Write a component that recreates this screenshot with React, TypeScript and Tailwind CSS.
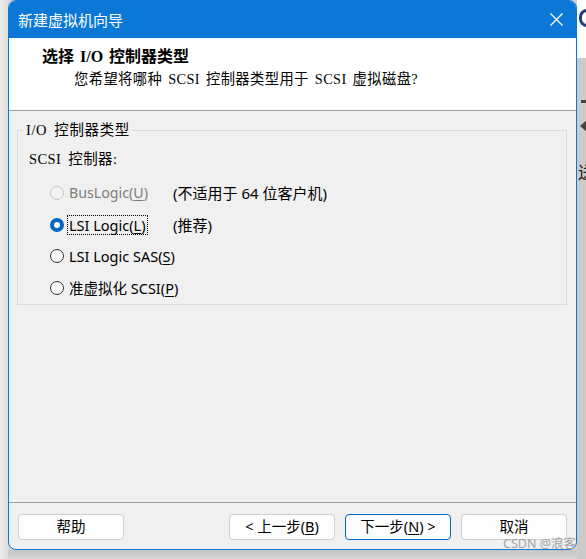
import React from "react";

const ui = "font-['Segoe_UI','Noto_Sans','Noto_Sans_CJK_SC',sans-serif]";
const song = "font-['Liberation_Serif','Noto_Sans_CJK_SC',serif]";

function Radio({ state }: { state: "checked" | "off" | "disabled" }) {
  if (state === "checked") {
    return (
      <span className="w-[14px] h-[14px] rounded-full bg-[#0067c0] flex items-center justify-center shrink-0">
        <span className="w-[6px] h-[6px] rounded-full bg-white" />
      </span>
    );
  }
  return (
    <span
      className={
        "w-[14px] h-[14px] rounded-full border shrink-0 " +
        (state === "disabled" ? "border-[#c6c6c6] bg-[#f3f3f3]" : "border-[#333333] bg-[#f7f7f7]")
      }
    />
  );
}

function Btn({ children, primary }: { children: React.ReactNode; primary?: boolean }) {
  return (
    <div
      className={
        "w-[106px] h-[26px] rounded-[4px] bg-[#fdfdfd] flex items-center justify-center text-[14.5px] text-black border " +
        (primary ? "border-[#0067c0]" : "border-[#d0d0d0]")
      }
    >
      {children}
    </div>
  );
}

export default function App() {
  return (
    <div className={"relative w-[586px] h-[559px] flex overflow-hidden bg-[#d4d4d4] " + ui}>
      {/* left backdrop */}
      <div className="w-[8px] h-full bg-gradient-to-r from-[#ebebeb] to-[#dedede]" />
      {/* window column */}
      <div className="w-[569px] h-full flex flex-col">
        <div className="w-[569px] h-[550px] flex flex-col rounded-[8px] border border-[#0a78d4] overflow-hidden bg-[#f0f0f0]">
          {/* title bar */}
          <div className="h-[37px] bg-[#0a78d4] flex items-center justify-between pl-[9px] pr-[13px] shrink-0">
            <span className="text-white text-[15px] leading-[20px] font-['Noto_Sans_CJK_SC',sans-serif]">
              新建虚拟机向导
            </span>
            <svg width="13" height="13" viewBox="0 0 13 13" className="mb-[1px]">
              <path d="M0.5 0.5 L12.5 12.5 M12.5 0.5 L0.5 12.5" stroke="white" strokeWidth="1.3" fill="none" />
            </svg>
          </div>
          {/* header */}
          <div className="h-[73px] bg-white border-b border-[#a0a0a0] shrink-0 flex flex-col pt-[9px]">
            <div className={"pl-[33px] text-[16px] leading-[20px] font-bold text-black [word-spacing:2px] " + song}>
              选择 I/O 控制器类型
            </div>
            <div
              className={
                "pl-[65px] mt-[2px] text-[14.3px] leading-[20px] text-black tracking-[0.4px] [word-spacing:2px] " + song
              }
            >
              您希望将哪种 SCSI 控制器类型用于 SCSI 虚拟磁盘?
            </div>
          </div>
          {/* main */}
          <div className="h-[392px] border-b border-[#a0a0a0] shrink-0 pt-[10px] pl-[8px] pr-[9px]">
            <fieldset className="border border-[#dcdcdc] pb-[0px]">
              <legend
                className={
                  "ml-[6px] px-[2px] text-[14.5px] leading-[18px] text-black tracking-[0.6px] [word-spacing:3px] " + song
                }
              >
                I/O 控制器类型
              </legend>
              <div
                className={
                  "mt-[10px] h-[20px] leading-[20px] pl-[11px] text-[14.5px] text-black tracking-[0.4px] [word-spacing:3px] " +
                  song
                }
              >
                SCSI 控制器:
              </div>
              <div className="mt-[8px] flex flex-col">
                <div className="h-[32px] flex items-center pl-[32px]">
                  <Radio state="disabled" />
                  <span className="ml-[5px] w-[104px] text-[14.2px] leading-[20px] text-[#7d7d7d]">
                    BusLogic(<span className="underline underline-offset-2">U</span>)
                  </span>
                  <span className="text-[15px] leading-[20px] text-black">(不适用于 64 位客户机)</span>
                </div>
                <div className="h-[31px] flex items-center pl-[32px]">
                  <Radio state="checked" />
                  <span className="ml-[5px] w-[104px] flex">
                    <span className="text-[14.5px] leading-[18px] text-black outline outline-1 outline-dotted outline-black -ml-[1px] pl-[1px] pr-[1px]">
                      LSI Logic(<span className="underline underline-offset-2">L</span>)
                    </span>
                  </span>
                  <span className="text-[15px] leading-[20px] text-black">(推荐)</span>
                </div>
                <div className="h-[32px] flex items-center pl-[32px]">
                  <Radio state="off" />
                  <span className="ml-[5px] text-[14.5px] leading-[20px] text-black">
                    LSI Logic SAS(<span className="underline underline-offset-2">S</span>)
                  </span>
                </div>
                <div className="h-[32px] flex items-center pl-[32px]">
                  <Radio state="off" />
                  <span className="ml-[5px] text-[14.5px] leading-[20px] text-black">
                    准虚拟化 SCSI(<span className="underline underline-offset-2">P</span>)
                  </span>
                </div>
              </div>
            </fieldset>
          </div>
          {/* footer */}
          <div className="flex-1 flex items-start pt-[11px] px-[9px] font-['Noto_Sans','Noto_Sans_CJK_SC',sans-serif]">
            <Btn>帮助</Btn>
            <div className="flex-1" />
            <div className="flex gap-[10px]">
              <Btn>
                &lt; 上一步(<span className="underline underline-offset-2">B</span>)
              </Btn>
              <Btn primary>
                下一步(<span className="underline underline-offset-2">N</span>) &gt;
              </Btn>
              <Btn>取消</Btn>
            </div>
          </div>
        </div>
        <div className="flex-1 bg-gradient-to-b from-[#c6c6c6] to-[#d6d6d6]" />
      </div>
      {/* right backdrop */}
      <div className="flex-1 h-full flex flex-col overflow-hidden">
        <div className="h-[58px] bg-white relative">
          <div className="absolute left-[2px] top-[9px] w-[16px] h-[18px] rounded-full border-[3px] border-[#1f3f7a]" />
        </div>
        <div className="flex-1 bg-[#cbcbcb] relative">
          <div className="absolute left-[4px] top-[42px] w-[6px] h-[3px] bg-[#444]" />
          <div className="absolute left-[3px] top-[62px] w-0 h-0 border-y-[6px] border-y-transparent border-r-[7px] border-r-[#444]" />
          <div className="absolute left-[1px] top-[104px] text-[17px] leading-[20px] text-[#222] font-['Noto_Sans_CJK_SC',sans-serif]">
            送
          </div>
        </div>
      </div>
      {/* watermark */}
      <div className="absolute left-[503px] top-[536px] text-[12.5px] leading-[16px] text-[#a3a3a3] font-['Noto_Sans','Noto_Sans_CJK_SC',sans-serif]">
        CSDN @浪客
      </div>
    </div>
  );
}
